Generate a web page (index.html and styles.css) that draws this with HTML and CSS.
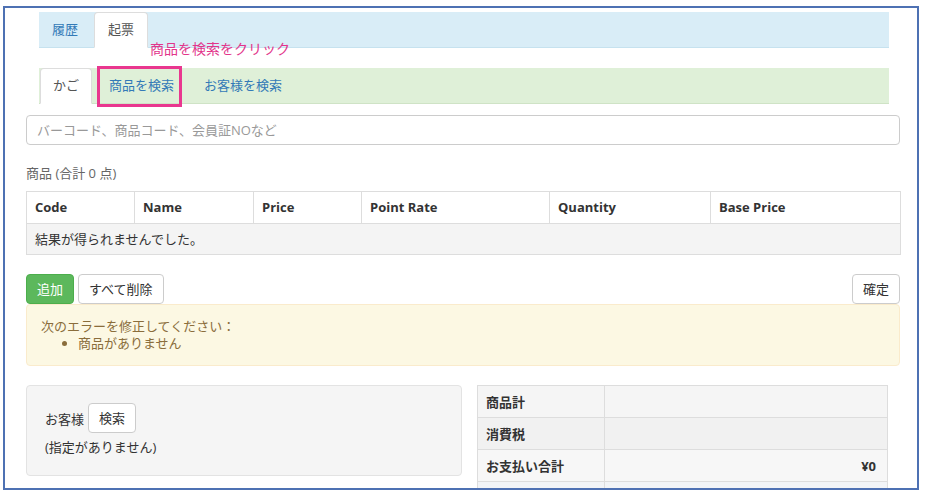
FILE: index.html
```html
<!DOCTYPE html>
<html lang="ja">
<head>
<meta charset="utf-8">
<title>起票</title>
<link rel="stylesheet" href="styles.css">
</head>
<body>
<div class="frame">
  <div class="annot-box"></div>
  <div class="annot-text">商品を検索をクリック</div>

  <ul class="tabs tabs-info">
    <li><a>履歴</a></li>
    <li class="active"><a>起票</a></li>
  </ul>

  <ul class="tabs tabs-success">
    <li class="active"><a>かご</a></li>
    <li><a>商品を検索</a></li>
    <li><a>お客様を検索</a></li>
  </ul>

  <input class="search" type="text" placeholder="バーコード、商品コード、会員証NOなど">

  <div class="count">商品 (合計 0 点)</div>

  <table class="grid">
    <colgroup>
      <col class="c-code"><col class="c-name"><col class="c-price"><col class="c-rate"><col class="c-qty"><col class="c-base">
    </colgroup>
    <thead>
      <tr><th>Code</th><th>Name</th><th>Price</th><th>Point Rate</th><th>Quantity</th><th>Base Price</th></tr>
    </thead>
    <tbody>
      <tr><td colspan="6">結果が得られませんでした。</td></tr>
    </tbody>
  </table>

  <div class="actions">
    <div class="actions-left">
      <button class="btn btn-success">追加</button>
      <button class="btn">すべて削除</button>
    </div>
    <button class="btn">確定</button>
  </div>

  <div class="alert">
    <div>次のエラーを修正してください：</div>
    <ul>
      <li>商品がありません</li>
    </ul>
  </div>

  <div class="bottom">
    <div class="well">
      <div class="customer-row">
        <span>お客様</span>
        <button class="btn">検索</button>
      </div>
      <div class="customer-none">(指定がありません)</div>
    </div>
    <table class="totals">
      <colgroup><col class="t-label"><col class="t-value"></colgroup>
      <tbody>
        <tr class="r1"><th>商品計</th><td></td></tr>
        <tr class="r2"><th>消費税</th><td></td></tr>
        <tr class="r3"><th>お支払い合計</th><td class="amount">¥0</td></tr>
        <tr class="r4"><th></th><td></td></tr>
      </tbody>
    </table>
  </div>
</div>
</body>
</html>
```

FILE: styles.css
```css
html, body {
  margin: 0;
  padding: 0;
  background: #fff;
}

body {
  font-family: "Open Sans", "Noto Sans CJK JP", sans-serif;
  font-size: 13px;
  color: #333;
}

.frame {
  position: relative;
  box-sizing: border-box;
  width: 916px;
  height: 484px;
  margin: 6px 0 0 3px;
  padding: 4px 17px 0 21px;
  border: 2px solid #4e71b3;
  overflow: hidden;
  background: #fff;
}

/* annotation overlay */
.annot-box {
  position: absolute;
  left: 92px;
  top: 58px;
  width: 85px;
  height: 41px;
  box-sizing: border-box;
  border: 3px solid #e9378f;
  z-index: 2;
}

.annot-text {
  position: absolute;
  left: 145px;
  top: 33px;
  font-size: 14px;
  line-height: 16px;
  color: #e2358b;
  z-index: 2;
}

/* tabs */
.tabs {
  display: flex;
  box-sizing: border-box;
  height: 36px;
  margin: 0 11px 0 13px;
  padding: 0;
  list-style: none;
}

.tabs-info {
  background: #d9edf7;
  border-bottom: 1px solid #c6e2ef;
}

.tabs-success {
  margin-top: 20px;
  background: #dff0d8;
  border-bottom: 1px solid #cfe3c6;
}

.tabs li a {
  display: block;
  box-sizing: border-box;
  height: 36px;
  margin-right: 4px;
  padding: 0 12px;
  line-height: 33px;
  color: #337ab7;
  border: 1px solid transparent;
  border-radius: 4px 4px 0 0;
}

.tabs-info li:first-child a {
  margin-right: 3px;
}

.tabs li.active a {
  background: #fff;
  color: #555;
  border-color: #ddd #ddd transparent;
}

.tabs-info li.active a {
  padding: 0 13px;
}

.tabs-success li:first-child a {
  margin-left: 1px;
}

/* search input */
.search {
  display: block;
  box-sizing: border-box;
  width: 100%;
  height: 30px;
  margin-top: 11px;
  padding: 0 10px;
  font-family: inherit;
  font-size: 13px;
  color: #555;
  border: 1px solid #ccc;
  border-radius: 4px;
  outline: none;
}

.search::placeholder {
  color: #999;
}

.count {
  margin-top: 19px;
  margin-bottom: 9px;
  line-height: 18px;
  color: #666;
}

/* product table */
.grid {
  width: 100%;
  border-collapse: collapse;
  table-layout: fixed;
}

.c-code { width: 108px; }
.c-name { width: 119px; }
.c-price { width: 108px; }
.c-rate { width: 188px; }
.c-qty { width: 161px; }
.c-base { width: 190px; }

.grid th,
.grid td {
  height: 30.5px;
  padding: 0 8px;
  border: 1px solid #ddd;
  text-align: left;
  line-height: 18px;
}

.grid th {
  font-weight: 700;
  background: #fff;
}

.grid td {
  background: #f4f4f4;
}

/* buttons */
.actions {
  display: flex;
  justify-content: space-between;
  margin-top: 19px;
}

.actions-left {
  display: flex;
  gap: 4px;
}

.btn {
  box-sizing: border-box;
  height: 30px;
  padding: 0 10px;
  font-family: inherit;
  font-size: 13px;
  color: #333;
  background: #fff;
  border: 1px solid #ccc;
  border-radius: 4px;
  line-height: 28px;
}

.btn-success {
  color: #fff;
  background: #5cb85c;
  border-color: #4cae4c;
}

/* alert */
.alert {
  padding: 13px 14px;
  line-height: 17px;
  color: #8a6d3b;
  background: #fcf8e3;
  border: 1px solid #faebcc;
  border-radius: 4px;
}

.alert ul {
  margin: 0;
  padding-left: 37px;
}

/* bottom */
.bottom {
  display: flex;
  align-items: flex-start;
  margin-top: 19px;
}

.well {
  box-sizing: border-box;
  width: 436px;
  height: 91px;
  padding: 17px 18px;
  background: #f5f5f5;
  border: 1px solid #e3e3e3;
  border-radius: 4px;
}

.customer-row {
  display: flex;
  align-items: center;
  gap: 4px;
  height: 30px;
  margin-bottom: 5px;
}

.customer-none {
  line-height: 18px;
}

.totals {
  width: 410px;
  margin-left: 15px;
  border-collapse: collapse;
  table-layout: fixed;
}

.t-label { width: 127px; }
.t-value { width: 283px; }

.totals th,
.totals td {
  height: 31px;
  padding: 0 8px;
  border: 1px solid #ddd;
  text-align: left;
  line-height: 18px;
}

.totals th {
  font-weight: 700;
}

.totals .r1 th, .totals .r1 td { background: #f5f5f5; }
.totals .r2 th, .totals .r2 td { background: #f1f1f1; }
.totals .r3 th, .totals .r3 td { background: #f7f7f7; }
.totals .r4 th, .totals .r4 td { background: #f2f4f7; }

.totals td.amount {
  text-align: right;
  padding-right: 11px;
  font-weight: 700;
}
```
